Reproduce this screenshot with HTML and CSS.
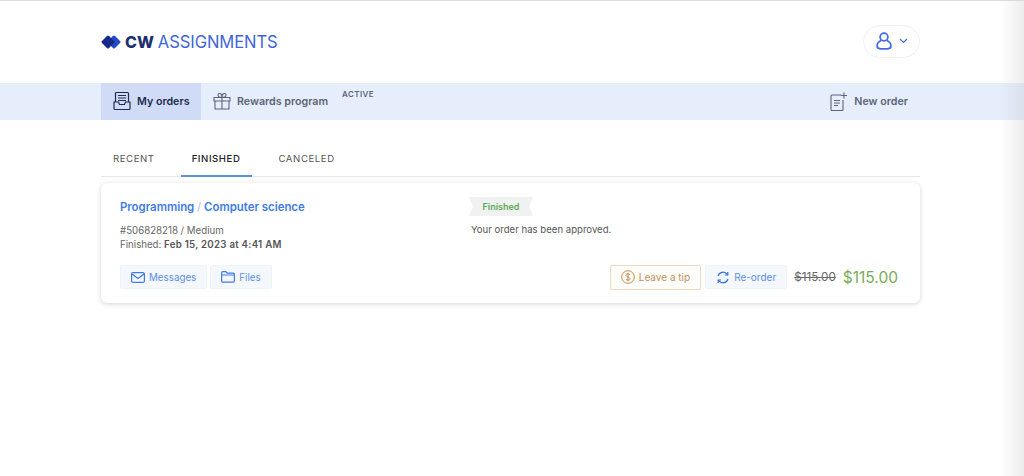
FILE: index.html
```html
<!DOCTYPE html>
<html lang="en">
<head>
<meta charset="utf-8">
<title>My orders</title>
<link rel="stylesheet" href="styles.css">
</head>
<body>
<div class="page">
  <header class="top wrap">
    <div class="logo">
      <svg class="logo-mark" width="20" height="14" viewBox="0 0 20 14"><rect x="2" y="2" width="10" height="10" rx="1.500" transform="rotate(45 7 7)" fill="#16298a"/><rect x="8" y="2" width="10" height="10" rx="1.500" transform="rotate(45 13 7)" fill="#2548c8"/><path fill="#142a80" d="M10 3l4 4-4 4-4-4z"/></svg>
      <span class="logo-cw">CW</span><span class="logo-name">ASSIGNMENTS</span>
    </div>
    <button class="user">
      <svg width="16" height="18" viewBox="0 0 16 18" fill="none" stroke="#3f6be8" stroke-width="1.700"><circle cx="8" cy="5" r="3.900"/><path d="M5.500 8.200C2.500 9.500 1 11.500 1 13.800 1 15.800 2.500 16.800 4.500 16.800h7c2 0 3.500-1 3.500-3 0-2.300-1.500-4.300-4.500-5.600"/></svg>
      <svg width="9" height="6" viewBox="0 0 9 6" fill="none" stroke="#3f6be8" stroke-width="1.100"><path d="M1 1l3.500 3.500L8 1"/></svg>
    </button>
  </header>
  <nav class="nav">
    <div class="wrap nav-in">
      <a class="nav-item current">
        <svg width="18" height="20" viewBox="0 0 18 20" fill="none" stroke="#1e2a4f" stroke-width="1.200"><path d="M2.500 11V2.500a1 1 0 0 1 1-1h11a1 1 0 0 1 1 1V11"/><path d="M5 4.500h8M5 7h8M5 9.500h8"/><path d="M1 11v6.500a1 1 0 0 0 1 1h14a1 1 0 0 0 1-1V11h-4.500l-1 2.500h-5L5.500 11z"/></svg>
        <span>My orders</span>
      </a>
      <a class="nav-item">
        <svg width="18" height="18" viewBox="0 0 18 18" fill="none" stroke="#5c6478" stroke-width="1.100"><path d="M1 5.500h16v3.500H1zM2 9v8h14V9M9 5.500V17"/><path d="M9 5.500C7 5.500 5 4.500 5 3s2-2 3-1 1 3.500 1 3.500zM9 5.500c2 0 4-1 4-2.500s-2-2-3-1-1 3.500-1 3.500z"/></svg>
        <span>Rewards program</span>
        <small class="active-tag">ACTIVE</small>
      </a>
      <a class="nav-item new">
        <svg width="18" height="19" viewBox="0 0 18 19" fill="none" stroke="#5c6478" stroke-width="1.100"><path d="M11.500 3H2a1 1 0 0 0-1 1v13.500a1 1 0 0 0 1 1h10a1 1 0 0 0 1-1V8"/><path d="M4 8.500h6M4 11h6M4 13.500h4M14 .5v6M11 3.500h6"/></svg>
        <span>New order</span>
      </a>
    </div>
  </nav>
  <main class="wrap">
    <div class="tabs">
      <a class="tab first">RECENT</a>
      <a class="tab on">FINISHED</a>
      <a class="tab last">CANCELED</a>
    </div>
    <section class="card">
      <div class="card-top">
        <div class="col-left">
          <h2 class="title">Programming <i>/</i> Computer science</h2>
          <p class="meta">#506828218 / Medium</p>
          <p class="meta">Finished: <b>Feb 15, 2023 at 4:41 AM</b></p>
        </div>
        <div class="col-right">
          <span class="ribbon">Finished</span>
          <p class="status">Your order has been approved.</p>
        </div>
      </div>
      <div class="card-bottom">
        <a class="btn">
          <svg width="14" height="11" viewBox="0 0 14 11" fill="none" stroke="#3f7be8" stroke-width="1.200"><rect x=".6" y=".6" width="12.800" height="9.800" rx="1.500"/><path d="M1 2l6 4.500L13 2"/></svg>
          Messages
        </a>
        <a class="btn">
          <svg width="14" height="12" viewBox="0 0 14 12" fill="none" stroke="#3f7be8" stroke-width="1.200"><path d="M.6 10V1.800A1.200 1.200 0 0 1 1.800.6h3l1.500 1.600h6a1.100 1.100 0 0 1 1.100 1.100V10a1.200 1.200 0 0 1-1.200 1.200H1.800A1.200 1.200 0 0 1 .6 10zM.6 4h12.800"/></svg>
          Files
        </a>
        <span class="spacer"></span>
        <a class="btn tip">
          <svg width="14" height="14" viewBox="0 0 14 14" fill="none" stroke="#c08a4e" stroke-width="1"><circle cx="7" cy="7" r="6.300"/><path d="M9 5c-.3-.8-1-1.200-2-1.200S5 4.300 5 5.200 6 6.600 7 7s2 .8 2 1.800-1 1.400-2 1.400-1.800-.4-2-1.200M7 2.800v8.400"/></svg>
          Leave a tip
        </a>
        <a class="btn redo">
          <svg width="14" height="13" viewBox="0 0 14 13" fill="none" stroke="#2f6fd8" stroke-width="1.200"><path d="M2 5a5.200 5.200 0 0 1 9.300-1.500M12 8a5.200 5.200 0 0 1-9.300 1.500"/><path d="M11.800 1v3h-3M2.200 12V9h3"/></svg>
          Re-order
        </a>
        <s class="old">$115.00</s>
        <strong class="price">$115.00</strong>
      </div>
    </section>
  </main>
  <div class="edge"></div>
</div>
</body>
</html>
```

FILE: styles.css
```css
* { box-sizing: border-box; }
html, body { margin: 0; height: 100%; }
body { background: #fff; font-family: Inter, "Liberation Sans", sans-serif; overflow: hidden; }
p, h2 { margin: 0; }
.page { position: relative; height: 476px; border-top: 1px solid #dcdcdc; overflow: hidden; }
.wrap { width: 819px; margin-left: 101px; }
.top { height: 82px; display: flex; align-items: center; justify-content: space-between; }
.logo { display: flex; align-items: center; }
.logo-mark { margin-right: 4px; }
.logo-cw { font-size: 16px; font-weight: 800; color: #1d2f6f; margin-right: 4px; }
.logo-name { font-size: 16.600px; font-weight: 400; color: #3f66d8; letter-spacing: -.1px; }
.user { width: 57px; height: 33px; border: 1px solid #eef0fb; border-radius: 17px; background: #fff; display: flex; align-items: center; justify-content: center; gap: 7px; padding: 0 0 0 1px; margin-top: -2px; }
.nav { height: 37px; background: #e6eefc; }
.nav-in { display: flex; height: 100%; align-items: stretch; }
.nav-item { display: flex; align-items: center; gap: 6px; font-size: 10.700px; font-weight: 600; color: #5c6478; position: relative; padding: 0 0 1px 12px; }
.nav-item.current { width: 100px; background: #d0dcf6; color: #1e2a4f; gap: 6px; }
.active-tag { position: absolute; left: 141px; top: 6px; font-size: 8px; font-weight: 600; letter-spacing: .4px; color: #5c6478; }
.nav-item.new { margin-left: auto; padding-right: 12px; }
.tabs { display: flex; height: 38px; margin-top: 19px; border-bottom: 1px solid #e6e8ec; }
.tab { height: 38px; padding: 1px 12px 0 11px; font-size: 9.600px; letter-spacing: .58px; color: #555; display: flex; align-items: center; }
.tab.first { padding-left: 12px; margin-right: 14px; }
.tab.last { margin-left: 15px; }
.tab.on { color: #222; font-weight: 500; border-bottom: 2px solid #5b90e0; padding-top: 3px; }
.card { margin-top: 6px; height: 120px; border-radius: 6px; background: #fff; box-shadow: 0 1px 5px rgba(0, 0, 0, .17); padding: 14px 22px 0 19px; }
.card-top { display: flex; height: 67px; }
.col-left { width: 349px; }
.title { font-size: 11.400px; font-weight: 600; line-height: 20px; color: #3f7be8; margin-bottom: 7px; }
.title i { font-style: normal; font-weight: 400; color: #a9c3f0; }
.meta { font-size: 9.700px; line-height: 14px; color: #666; }
.meta b { font-weight: 600; color: #555; letter-spacing: .26px; }
.ribbon { display: flex; align-items: center; justify-content: center; width: 64px; height: 19px; font-size: 9px; font-weight: 600; color: #5aa854; background: #f0f2f2; clip-path: polygon(0 0, 100% 0, 94% 50%, 100% 100%, 0 100%, 6% 50%); }
.status { font-size: 9.600px; line-height: 14px; color: #555; margin: 7px 0 0 2px; }
.card-bottom { display: flex; align-items: center; gap: 3px; height: 26px; }
.btn { height: 24px; padding: 0 10px; display: flex; align-items: center; gap: 4px; font-size: 9.800px; color: #5b8fe6; background: #f4f8fd; border: 1px solid #eef3fa; border-radius: 2px; }
.spacer { flex: 1; }
.btn.tip { height: 25px; font-size: 10px; background: #fffdfa; border-color: #eed9bf; color: #bd9260; margin-right: 1px; }
.btn.redo { font-size: 10px; }
.old { font-size: 11.700px; color: #666; margin-left: 4px; }
.price { font-size: 15.500px; font-weight: 400; color: #76ad54; margin-left: 4px; }
.edge { position: absolute; top: 0; right: 0; bottom: 0; width: 24px; background: linear-gradient(to right, rgba(190, 190, 190, 0), rgba(190, 190, 190, .28)); }
```
